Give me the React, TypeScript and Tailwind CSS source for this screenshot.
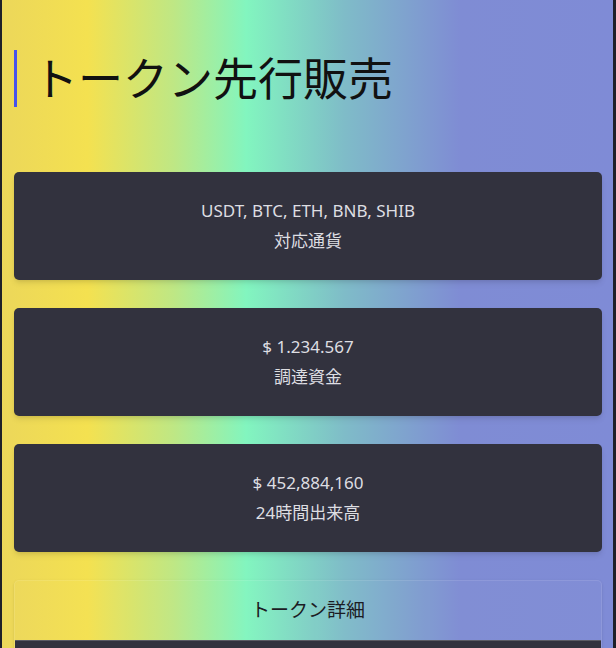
import React from "react";

const stats = [
    { value: "USDT, BTC, ETH, BNB, SHIB", label: "対応通貨" },
    { value: "$ 1.234.567", label: "調達資金" },
    { value: "$ 452,884,160", label: "24時間出来高" },
];

const StatCard = ({ value, label }: { value: string; label: string }) => (
    <div className="h-[108px] rounded-[5px] bg-[#32323e] shadow-md flex flex-col items-center justify-center text-[17px] leading-[30px] text-[#dedee2]">
        <div>{value}</div>
        <div>{label}</div>
    </div>
);

const App = () => {
    return (
        <div
            className="min-h-screen bg-[#1e1f28] pl-[2px] pr-[3px]"
            style={{ fontFamily: '"Noto Sans", "Noto Sans CJK JP", sans-serif' }}
        >
            <div className="min-h-screen bg-[linear-gradient(to_right,#ecd75a_0%,#f4e150_14%,#bfe784_28%,#82f5bf_40%,#7fbcc8_56%,#7f8cd4_75%,#7f8bd6_100%)] pl-3 pr-[11px] pt-[50px] pb-10">
                <h1 className="border-l-[3px] border-[#4652ec] pl-4 text-[45px] leading-[57px] text-[#111] font-normal">
                    トークン先行販売
                </h1>

                <div className="mt-[65px] flex flex-col gap-7">
                    {stats.map((s) => (
                        <StatCard key={s.label} value={s.value} label={s.label} />
                    ))}

                    <div className="rounded-[5px] border border-white/10 bg-white/[0.02] shadow-sm">
                        <div className="h-[59px] flex items-center justify-center text-[19px] text-[#1c1c24]">
                            トークン詳細
                        </div>
                        <div className="h-[120px] bg-[#32323e] border-t border-white/20 rounded-b-[5px]" />
                    </div>
                </div>
            </div>
        </div>
    );
};

export default App;
